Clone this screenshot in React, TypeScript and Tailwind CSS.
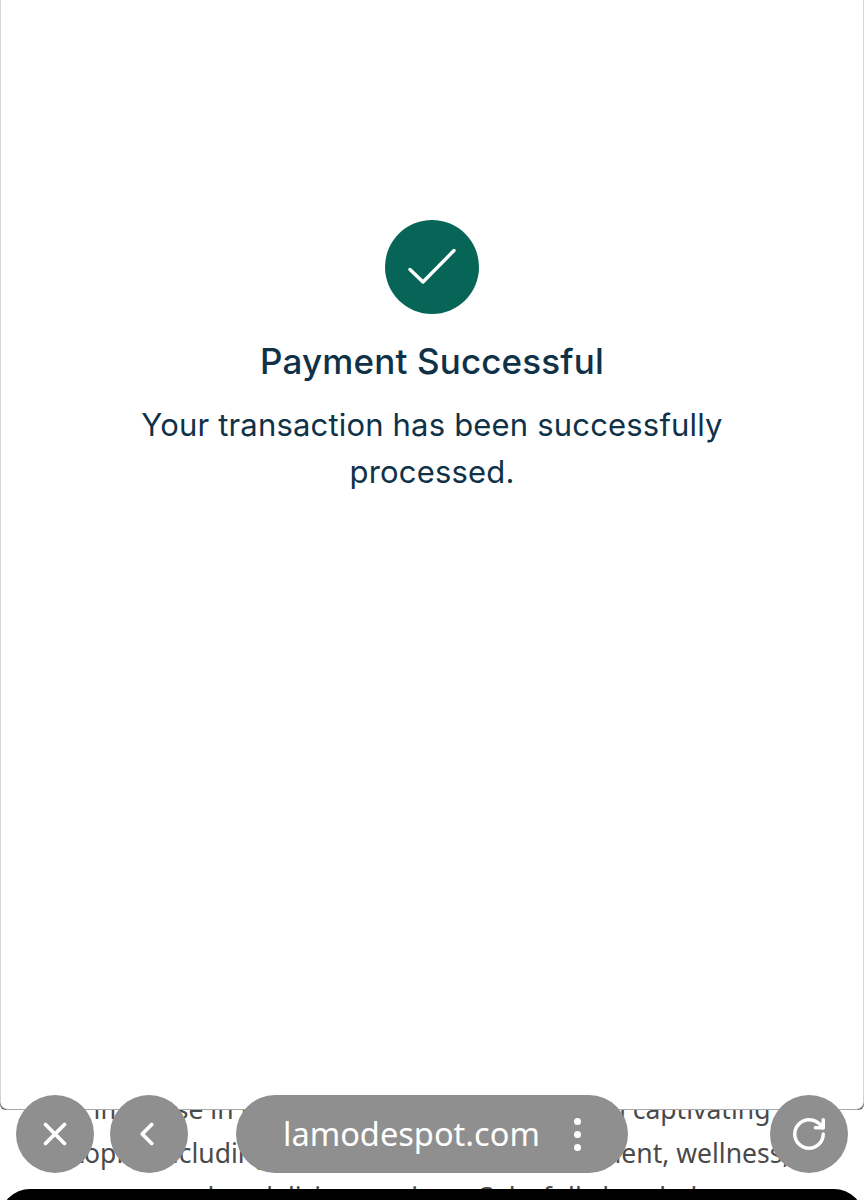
import { ChevronLeft, RotateCw, X } from "lucide-react"

const App = () => {
    return (
        <div className="relative w-[864px] h-[1200px] overflow-hidden bg-white font-['Inter',sans-serif]">
            {/* Page text behind the sheet */}
            <div className="absolute left-0 right-0 top-[1087px] text-center text-[26.5px] leading-[44px] text-[#4a4a4a] font-['Noto_Sans',sans-serif] whitespace-nowrap">
                <p>immerse in the thrilling realm of stories on captivating</p>
                <p>topics including fashion, beauty, entertainment, wellness,</p>
                <p>and so delicious recipes. Colorfully handed</p>
            </div>

            {/* Sheet */}
            <div className="relative h-[1110px] bg-[#2f3f3a] rounded-b-[6px]">
                <div className="h-[1110px] bg-white border border-t-0 border-[#d4d4d4] border-b-[#a8a8a8] rounded-b-[8px] flex flex-col items-center pt-[220px]">
                    <div className="w-[94px] h-[94px] rounded-full bg-[#066557] flex items-center justify-center">
                        <svg width="52" height="40" viewBox="0 0 52 40" fill="none">
                            <path d="M4 22.5 L17 35 L48 3.5" stroke="white" strokeWidth="3.4" strokeLinecap="round" strokeLinejoin="round" />
                        </svg>
                    </div>
                    <h1 className="mt-[24px] text-[35px] leading-[46px] tracking-[0.15px] font-medium text-[#0f3249]">Payment Successful</h1>
                    <p className="mt-[17px] w-[640px] text-center text-[31px] leading-[47px] tracking-[0.18px] text-[#0f3249]">
                        Your transaction has been successfully processed.
                    </p>
                </div>
            </div>

            {/* Black bottom bar */}
            <div className="absolute left-0 right-0 top-[1189px] h-[60px] bg-black rounded-t-[30px]" />

            {/* Browser floating controls */}
            <div className="absolute left-[16px] right-[16px] top-[1095px] flex items-center text-white">
                <div className="w-[78px] h-[78px] rounded-full bg-[#8f8f8f] flex items-center justify-center">
                    <X size={38} strokeWidth={2.4} />
                </div>
                <div className="ml-[16px] w-[78px] h-[78px] rounded-full bg-[#8f8f8f] flex items-center justify-center">
                    <ChevronLeft size={38} strokeWidth={2.4} className="-ml-[4px]" />
                </div>
                <div className="ml-[48px] w-[392px] h-[78px] rounded-[39px] bg-[#8f8f8f] flex items-center pl-[47px] pr-[47px] justify-between">
                    <span className="text-[32.6px] font-['Noto_Sans',sans-serif]">lamodespot.com</span>
                    <span className="flex flex-col gap-[6px]">
                        <span className="w-[7px] h-[7px] rounded-full bg-white" />
                        <span className="w-[7px] h-[7px] rounded-full bg-white" />
                        <span className="w-[7px] h-[7px] rounded-full bg-white" />
                    </span>
                </div>
                <div className="ml-auto w-[78px] h-[78px] rounded-full bg-[#8f8f8f] flex items-center justify-center">
                    <RotateCw size={38} strokeWidth={2.2} />
                </div>
            </div>
        </div>
    )
}

export default App
